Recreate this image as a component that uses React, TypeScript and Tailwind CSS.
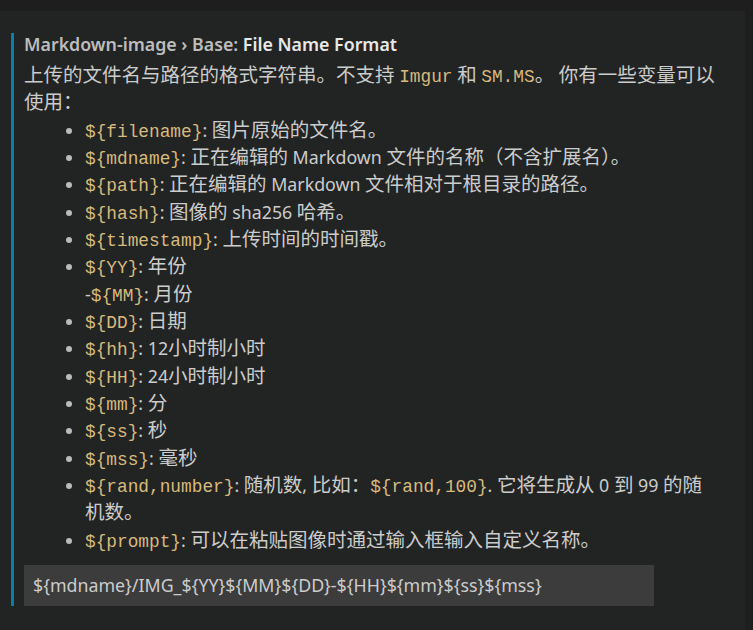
import React from "react";

const sans = {
  fontFamily: '"Segoe UI", "Noto Sans", "Noto Sans CJK SC", sans-serif',
};

// CJK glyphs sit a bit larger than the latin text in the original
function T({ children }: { children: string }) {
  const parts = children.split(/([\u3000-\u303f\u4e00-\u9fff\uff00-\uffef]+)/);
  return (
    <>
      {parts.map((p, i) =>
        i % 2 === 1 ? (
          <span key={i} className="text-[19.5px] leading-none">
            {p}
          </span>
        ) : (
          p
        )
      )}
    </>
  );
}

function Code({ children }: { children: React.ReactNode }) {
  return (
    <code
      className="text-[#d7ba7d] text-[17.8px] leading-none"
      style={{ fontFamily: '"Liberation Mono", "DejaVu Sans Mono", monospace' }}
    >
      {children}
    </code>
  );
}

const items: { code: string; text: React.ReactNode; extra?: React.ReactNode }[] = [
  { code: "${filename}", text: <T>图片原始的文件名。</T> },
  { code: "${mdname}", text: <T>正在编辑的 Markdown 文件的名称（不含扩展名）。</T> },
  { code: "${path}", text: <T>正在编辑的 Markdown 文件相对于根目录的路径。</T> },
  { code: "${hash}", text: <T>图像的 sha256 哈希。</T> },
  { code: "${timestamp}", text: <T>上传时间的时间戳。</T> },
  {
    code: "${YY}",
    text: <T>年份</T>,
    extra: (
      <>
        <br />-<Code>{"${MM}"}</Code>: <T>月份</T>
      </>
    ),
  },
  { code: "${DD}", text: <T>日期</T> },
  { code: "${hh}", text: <T>12小时制小时</T> },
  { code: "${HH}", text: <T>24小时制小时</T> },
  { code: "${mm}", text: <T>分</T> },
  { code: "${ss}", text: <T>秒</T> },
  { code: "${mss}", text: <T>毫秒</T> },
  {
    code: "${rand,number}",
    text: (
      <>
        <T>随机数, 比如：</T>
        <Code>{"${rand,100}"}</Code>
        <T>. 它将生成从 0 到 99 的随机数。</T>
      </>
    ),
  },
  { code: "${prompt}", text: <T>可以在粘贴图像时通过输入框输入自定义名称。</T> },
];

export default function App() {
  return (
    <div className="h-[630px] w-[753px] bg-[#1e1e1e] pt-[11px] pr-[8px] overflow-hidden" style={sans}>
      <div className="h-full bg-[#222423] pt-[22px]">
        <div className="ml-[11px] w-[711px] border-l-[3px] border-[#0b7ea6] pl-[10px] text-[17.8px] text-[#cccccc]">
          <div className="leading-[22px] font-semibold text-[#bdbdbd]">
            Markdown-image › Base: <span className="text-[#e8e8e8]">File Name Format</span>
          </div>
          <p className="mt-[7px] leading-[27.3px]">
            <T>上传的文件名与路径的格式字符串。不支持 </T>
            <Code>Imgur</Code> <T>和 </T>
            <Code>SM.MS</Code>
            <T>。 你有一些变量可以使用：</T>
          </p>
          <ul className="list-disc pl-[61px] pr-[4px] leading-[27.33px] marker:text-[#bbbbbb]">
            {items.map((it) => (
              <li key={it.code}>
                <Code>{it.code}</Code>: {it.text}
                {it.extra}
              </li>
            ))}
          </ul>
          <div className="mt-[11px] flex h-[41px] w-[630px] items-center bg-[#3c3c3c] pl-[9px] text-[#cccccc]">
            {"${mdname}/IMG_${YY}${MM}${DD}-${HH}${mm}${ss}${mss}"}
          </div>
        </div>
      </div>
    </div>
  );
}
